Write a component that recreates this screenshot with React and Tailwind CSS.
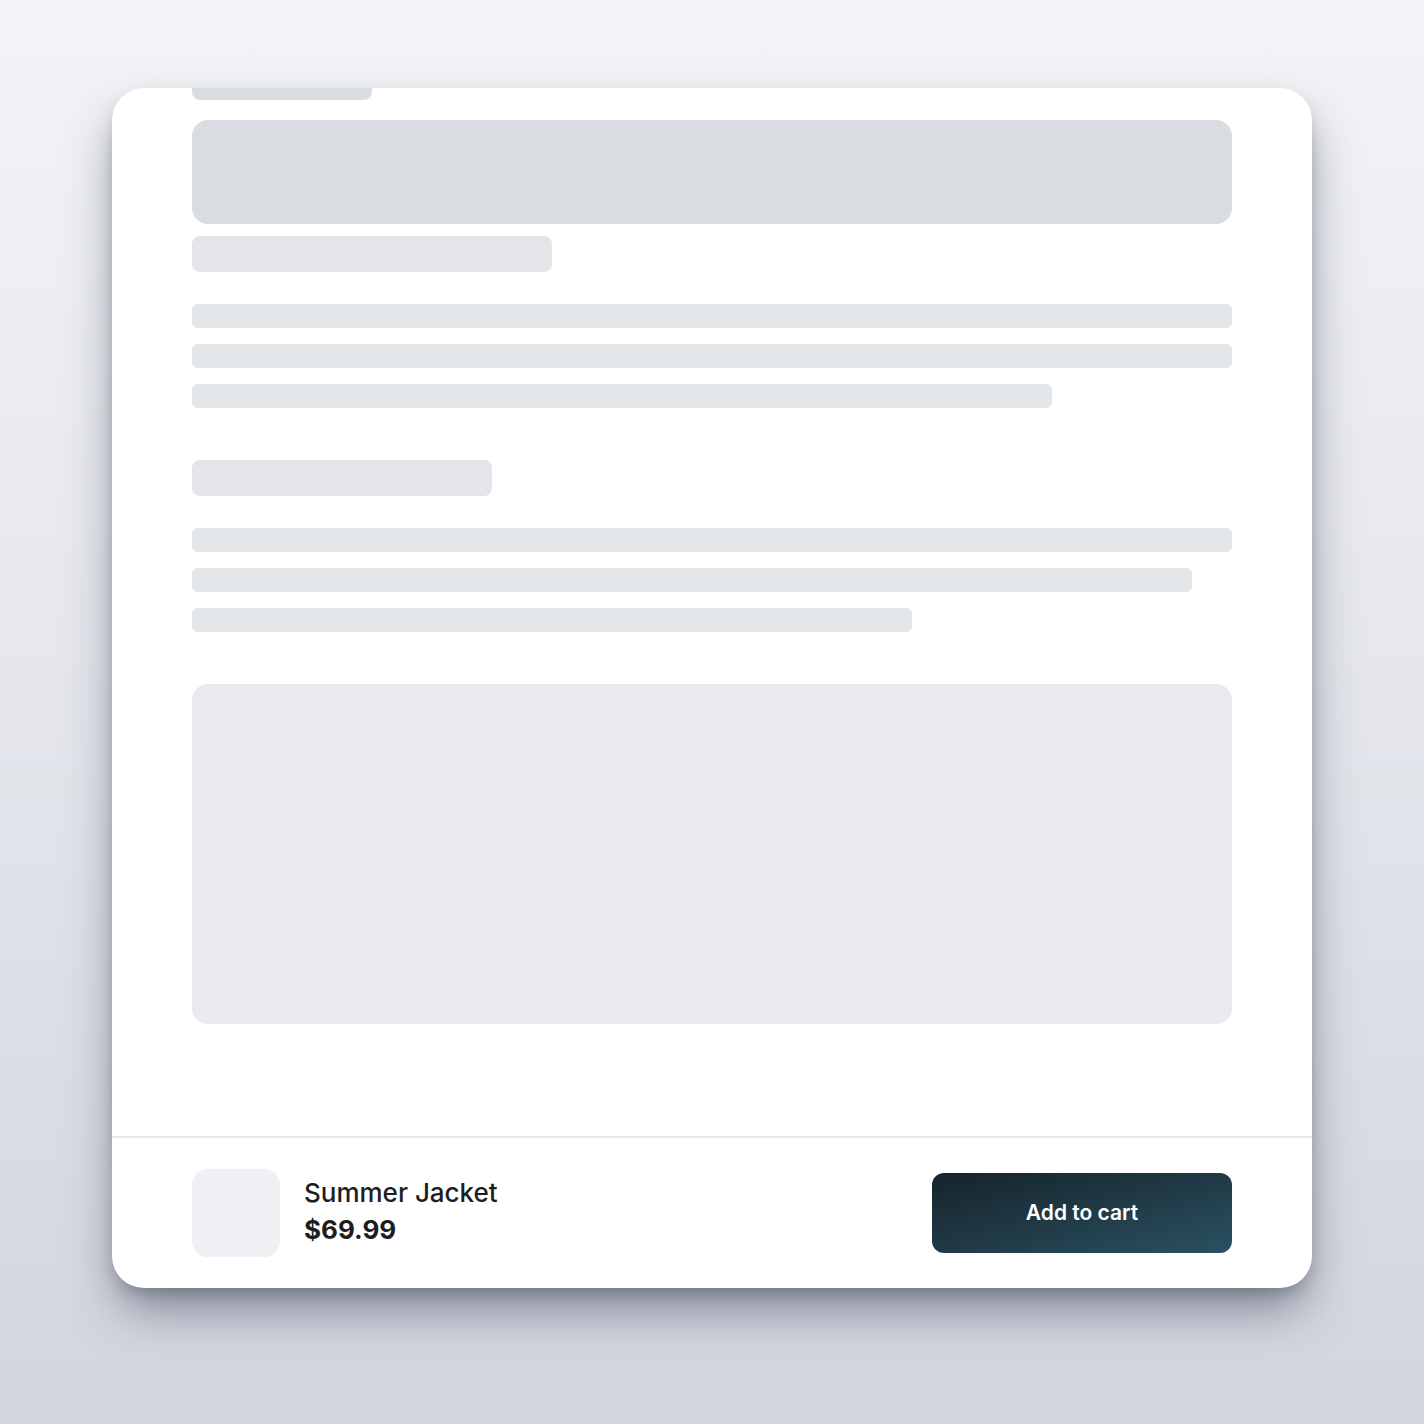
export default function App() {
  const lines1 = ['w-full', 'w-full', 'w-[860px]']
  const lines2 = ['w-full', 'w-[1000px]', 'w-[720px]']

  return (
    <div
      className="min-h-[1424px] w-full bg-gradient-to-b from-[#f3f4f7] via-[#e4e6ec] to-[#d2d5df] flex justify-center pt-[88px]"
      style={{ fontFamily: 'Inter, "Noto Sans", sans-serif' }}
    >
      <div className="w-[1200px] h-[1200px] bg-white rounded-[32px] overflow-hidden flex flex-col shadow-[0_26px_50px_-6px_rgba(40,48,66,0.5),0_8px_16px_-4px_rgba(40,48,66,0.28)]">
        {/* scrolling body */}
        <div className="flex-1 overflow-hidden px-20">
          <div className="mt-[-24px] flex flex-col">
            <div className="w-[180px] h-[36px] rounded-lg bg-[#d9dce1]" />
            <div className="mt-5 h-[104px] rounded-2xl bg-[#d9dce0]" />
            <div className="mt-3 w-[360px] h-[36px] rounded-lg bg-[#e3e5e8]" />

            <div className="mt-8 flex flex-col gap-4">
              {lines1.map((w, i) => (
                <div key={i} className={`${w} h-6 rounded-md bg-[#e4e7ea]`} />
              ))}
            </div>

            <div className="mt-[52px] w-[300px] h-[36px] rounded-lg bg-[#e3e5e8]" />

            <div className="mt-8 flex flex-col gap-4">
              {lines2.map((w, i) => (
                <div key={i} className={`${w} h-6 rounded-md bg-[#e4e7ea]`} />
              ))}
            </div>

            <div className="mt-[52px] h-[340px] rounded-2xl bg-[#e8eaed]" />
          </div>
        </div>

        {/* footer */}
        <div className="h-[152px] shrink-0 border-t-2 border-[#e8e9ec] px-20 flex items-center justify-between">
          <div className="flex items-center gap-6">
            <div className="w-[88px] h-[88px] rounded-2xl bg-[#eff0f3]" />
            <div className="flex flex-col pb-1">
              <span className="text-[26px] leading-[38px] font-medium text-[#1c1e21]">Summer Jacket</span>
              <span className="text-[26px] leading-[36px] font-bold text-[#1c1e21]">$69.99</span>
            </div>
          </div>
          <button className="w-[300px] h-[80px] rounded-xl bg-gradient-to-br from-[#16242b] to-[#2a5162] text-white text-[21px] font-semibold">
            Add to cart
          </button>
        </div>
      </div>
    </div>
  )
}
